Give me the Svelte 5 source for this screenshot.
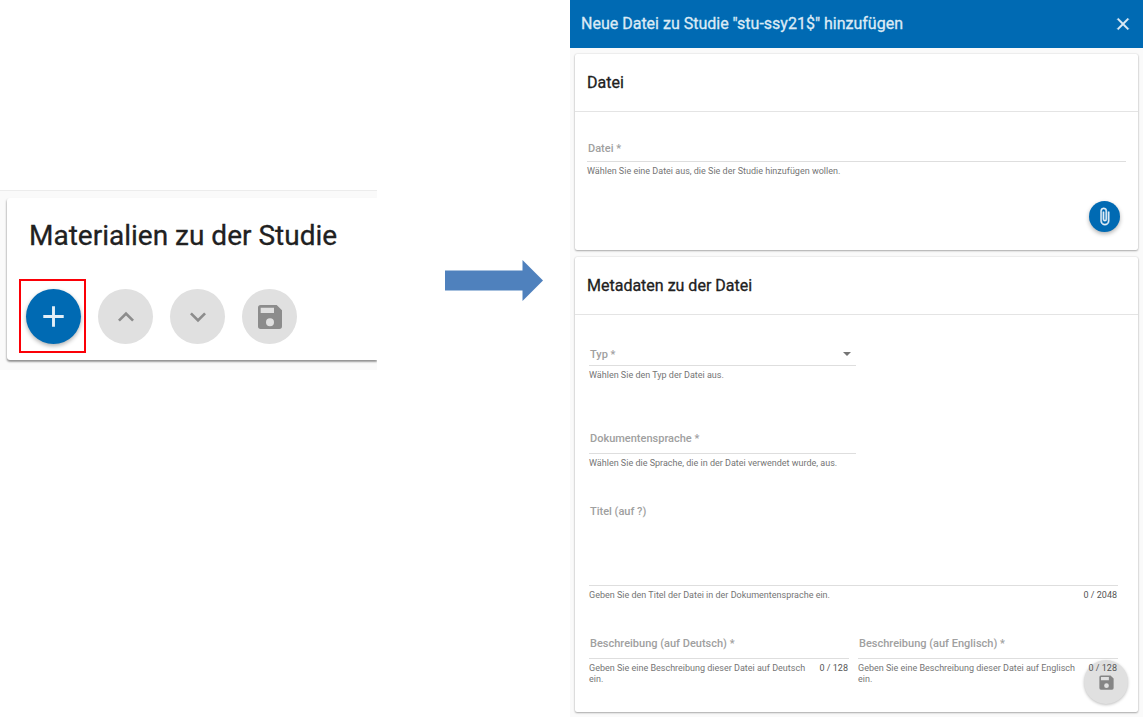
<script>
  let file = $state('');
  let type = $state('');
  let language = $state('');
  let title = $state('');
  let descriptionDe = $state('');
  let descriptionEn = $state('');
</script>

{#snippet saveIcon()}
  <svg viewBox="0 0 24 24" aria-hidden="true">
    <path d="M17 3H5a2 2 0 0 0-2 2v14a2 2 0 0 0 2 2h14a2 2 0 0 0 2-2V7l-4-4zm-5 16a3 3 0 1 1 0-6 3 3 0 0 1 0 6zm3-10H5V5h10v4z" />
  </svg>
{/snippet}

<main class="page">
  <section class="materials">
    <div class="materials-card">
      <h1>Materialien zu der Studie</h1>
      <div class="actions">
        <div class="highlight">
          <button class="round primary" aria-label="Hinzufügen">
            <svg class="plus" viewBox="0 0 24 24" aria-hidden="true"><path d="M19 13h-6v6h-2v-6H5v-2h6V5h2v6h6v2z" /></svg>
          </button>
          <svg class="pointer" viewBox="0 0 20 41" aria-hidden="true">
            <path d="M10 41V5" stroke-width="4" />
            <path d="M2.3 17L10 4l7.7 13" stroke-width="4" stroke-linecap="round" />
          </svg>
        </div>
        <button class="round" disabled aria-label="Nach oben">
          <svg viewBox="0 0 24 24" aria-hidden="true"><path d="M12 8l-6 6 1.41 1.41L12 10.83l4.59 4.58L18 14z" /></svg>
        </button>
        <button class="round" disabled aria-label="Nach unten">
          <svg viewBox="0 0 24 24" aria-hidden="true"><path d="M16.59 8.59L12 13.17 7.41 8.59 6 10l6 6 6-6z" /></svg>
        </button>
        <button class="round" disabled aria-label="Speichern">{@render saveIcon()}</button>
      </div>
    </div>
  </section>

  <svg class="arrow" viewBox="0 0 98 41" aria-hidden="true">
    <path d="M0 10.500h77.500V0L98 20.500 77.500 41V30.500H0z" />
  </svg>

  <section class="dialog">
    <header class="toolbar">
      <h2>Neue Datei zu Studie "stu-ssy21$" hinzufügen</h2>
      <button class="close" aria-label="Schließen">
        <svg viewBox="0 0 24 24" aria-hidden="true"><path d="M19 6.410L17.590 5 12 10.590 6.410 5 5 6.410 10.590 12 5 17.590 6.410 19 12 13.410 17.590 19 19 17.590 13.410 12z" /></svg>
      </button>
    </header>

    <div class="cards">
      <section class="card">
        <h3>Datei</h3>
        <div class="body file-body">
          <div class="field">
            <div class="control medium">
              <label for="file">Datei *</label>
              <input id="file" bind:value={file} />
            </div>
            <div class="hint"><span>Wählen Sie eine Datei aus, die Sie der Studie hinzufügen wollen.</span></div>
          </div>
          <button class="attach primary" aria-label="Datei auswählen">
            <svg viewBox="0 0 24 24" aria-hidden="true"><path d="M16.500 6v11.500a4 4 0 0 1-8 0V5a2.500 2.500 0 0 1 5 0v10.500a1 1 0 0 1-2 0V6H10v9.500a2.500 2.500 0 0 0 5 0V5a4 4 0 0 0-8 0v12.500a5.500 5.500 0 0 0 11 0V6h-1.500z" /></svg>
          </button>
        </div>
      </section>

      <section class="card">
        <h3>Metadaten zu der Datei</h3>
        <div class="body meta-body">
          <div class="field half type">
            <div class="control small">
              <label for="type">Typ *</label>
              <select id="type" bind:value={type}><option value=""></option></select>
              <svg class="caret" viewBox="0 0 8 4" aria-hidden="true"><path d="M0 0h8L4 4z" /></svg>
            </div>
            <div class="hint"><span>Wählen Sie den Typ der Datei aus.</span></div>
          </div>
          <div class="field half language">
            <div class="control">
              <label for="language">Dokumentensprache *</label>
              <input id="language" bind:value={language} />
            </div>
            <div class="hint"><span>Wählen Sie die Sprache, die in der Datei verwendet wurde, aus.</span></div>
          </div>
          <div class="field title">
            <div class="control tall">
              <label for="title">Titel (auf ?)</label>
              <textarea id="title" maxlength="2048" bind:value={title}></textarea>
            </div>
            <div class="hint">
              <span>Geben Sie den Titel der Datei in der Dokumentensprache ein.</span>
              <span class="count">{title.length} / 2048</span>
            </div>
          </div>
          <div class="pair">
            <div class="field">
              <div class="control">
                <label for="de">Beschreibung (auf Deutsch) *</label>
                <input id="de" maxlength="128" bind:value={descriptionDe} />
              </div>
              <div class="hint">
                <span>Geben Sie eine Beschreibung dieser Datei auf Deutsch ein.</span>
                <span class="count">{descriptionDe.length} / 128</span>
              </div>
            </div>
            <div class="field">
              <div class="control">
                <label for="en">Beschreibung (auf Englisch) *</label>
                <input id="en" maxlength="128" bind:value={descriptionEn} />
              </div>
              <div class="hint">
                <span>Geben Sie eine Beschreibung dieser Datei auf Englisch ein.</span>
                <span class="count">{descriptionEn.length} / 128</span>
              </div>
            </div>
          </div>
        </div>
      </section>
    </div>
    <button class="save" disabled aria-label="Datei speichern">{@render saveIcon()}</button>
  </section>
</main>

<style>
  :global(body) {
    background: #fff;
  }
  .page {
    display: grid;
    grid-template-columns: 377fr 193fr 573fr;
    align-items: start;
    font-family: Roboto, sans-serif;
    color: #212121;
  }
  h1, h2, h3 {
    margin: 0;
    font-weight: 400;
  }
  button {
    display: flex;
    align-items: center;
    justify-content: center;
    padding: 0;
    border: 0;
    flex: none;
  }
  svg {
    display: block;
    fill: currentColor;
  }

  .materials {
    margin-top: 190px;
    padding: 7px 0 10px 7px;
    border-top: 1px solid #ececec;
    background: #fafafa;
  }
  .materials-card {
    padding: 21px 0 16px 22px;
    border-radius: 3px 0 0 3px;
    background: #fff;
    box-shadow: -1px 1px 2px rgba(0, 0, 0, 0.12), 0 2px 2px rgba(0, 0, 0, 0.35);
    clip-path: inset(-4px 0 -6px -4px);
  }
  h1 {
    font-size: 28px;
    line-height: 34px;
    white-space: nowrap;
    -webkit-text-stroke: 0.3px currentColor;
  }
  .actions {
    display: flex;
    gap: 17px;
    margin: 36px 0 0 -3px;
  }
  .round {
    width: 55px;
    height: 55px;
    border-radius: 50%;
    background: #e0e0e0;
    color: #8c8c8c;
  }
  .round svg {
    width: 32px;
    height: 32px;
  }
  .round .plus {
    width: 35px;
    height: 35px;
  }
  .primary {
    background: #006ab3;
    color: #e4eff7;
    box-shadow: 0 2px 4px rgba(0, 0, 0, 0.3);
  }
  .highlight {
    position: relative;
  }
  .highlight::before {
    content: '';
    position: absolute;
    inset: -10px -5px -9px -7px;
    border: 2px solid #fb0007;
    pointer-events: none;
  }
  .pointer {
    position: absolute;
    top: 82px;
    left: 17px;
    width: 20px;
    height: 41px;
    fill: none;
    stroke: #fe0000;
  }

  .arrow {
    width: 98px;
    margin: 260px 0 0 68px;
    color: #4f81bd;
  }

  .dialog {
    position: relative;
    background: #fafafa;
  }
  .toolbar {
    display: flex;
    align-items: center;
    justify-content: space-between;
    height: 48px;
    padding: 0 10px 0 11px;
    background: #006ab3;
    color: #dceaf5;
  }
  h2 {
    font-size: 16px;
    line-height: 20px;
    -webkit-text-stroke: 0.3px currentColor;
  }
  .close {
    background: none;
    color: inherit;
  }
  .close svg {
    width: 20px;
    height: 20px;
    stroke: currentColor;
    stroke-width: 0.6;
  }
  .cards {
    display: grid;
    gap: 7px;
    padding: 6px 5px 5px;
  }
  .card {
    border-radius: 2px;
    background: #fff;
    box-shadow: 0 0 2px rgba(0, 0, 0, 0.14), 0 1px 2px rgba(0, 0, 0, 0.3);
  }
  h3 {
    padding: 19px 12px 18px;
    border-bottom: 1px solid #e4e4e4;
    font-size: 16px;
    line-height: 20px;
    -webkit-text-stroke: 0.3px currentColor;
  }
  .file-body {
    padding: 23px 12px 18px;
  }
  .attach {
    width: 31px;
    height: 31px;
    margin: 24px 6px 0 auto;
    border-radius: 50%;
  }
  .attach svg {
    width: 19px;
    height: 19px;
    stroke: currentColor;
    stroke-width: 0.6;
  }
  .meta-body {
    padding: 28px 20px 27px 14px;
  }
  .control {
    display: grid;
    align-items: center;
    height: 30px;
    border-bottom: 1px solid #dedede;
  }
  .control > * {
    grid-area: 1 / 1;
  }
  .medium {
    height: 26px;
  }
  .small {
    height: 22px;
  }
  .tall {
    height: 90px;
  }
  .tall label {
    align-self: start;
    margin-top: 8px;
  }
  label {
    padding: 2px 0 0 1px;
    color: #a0a0a0;
    font-size: 11px;
    font-weight: 500;
    line-height: 14px;
  }
  input, select, textarea {
    box-sizing: border-box;
    width: 100%;
    height: 100%;
    padding: 0 1px;
    border: 0;
    outline: 0;
    background: transparent;
    appearance: none;
    resize: none;
    font: 11px Roboto, sans-serif;
  }
  .caret {
    width: 8px;
    margin-right: 5px;
    justify-self: end;
    color: #757575;
    pointer-events: none;
  }
  .hint {
    display: flex;
    align-items: start;
    justify-content: space-between;
    gap: 4px;
    padding-top: 4px;
    color: #757575;
    font-size: 9px;
    line-height: 11px;
  }
  .count {
    position: relative;
    z-index: 2;
    padding-right: 1px;
    color: #555;
    white-space: nowrap;
  }
  .half {
    width: calc(50% + 2px);
  }
  .language {
    margin-top: 42px;
  }
  .title {
    margin-top: 26px;
  }
  .pair {
    display: grid;
    grid-template-columns: 1fr 1fr;
    gap: 9px;
    margin-top: 27px;
  }
  .save {
    position: absolute;
    right: 15px;
    bottom: 13px;
    z-index: 1;
    width: 44px;
    height: 44px;
    border-radius: 50%;
    background: #e0e0e0;
    color: #858585;
    box-shadow: 0 1px 3px rgba(0, 0, 0, 0.25);
  }
  .save svg {
    width: 19px;
    height: 19px;
  }
</style>
